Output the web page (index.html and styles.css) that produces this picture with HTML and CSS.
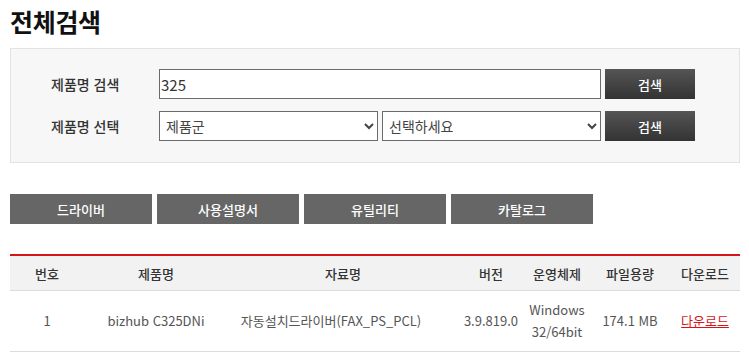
FILE: index.html
```html
<!DOCTYPE html>
<html lang="ko">
<head>
  <meta charset="UTF-8" />
  <title>전체검색</title>
  <link rel="stylesheet" href="styles.css">
</head>
<body>
  <div class="wrap">
    <h1 class="page-title">전체검색</h1>

    <!-- 검색 박스 -->
    <div class="search-box">
      <div class="search-row">
        <label class="search-label">제품명 검색</label>
        <input type="text" class="search-input" value="325" />
        <button class="search-btn">검색</button>
      </div>
      <div class="search-row">
        <label class="search-label">제품명 선택</label>
        <select class="search-select">
          <option>제품군</option>
        </select>
        <select class="search-select">
          <option>선택하세요</option>
        </select>
        <button class="search-btn">검색</button>
      </div>
    </div>

    <!-- 자료 분류 탭 -->
    <div class="tabs">
      <button class="tab">드라이버</button>
      <button class="tab">사용설명서</button>
      <button class="tab">유틸리티</button>
      <button class="tab">카탈로그</button>
    </div>

    <!-- 결과 목록 -->
    <table class="result-table">
      <colgroup>
        <col style="width:74px">
        <col style="width:144px">
        <col style="width:230px">
        <col style="width:66px">
        <col style="width:66px">
        <col style="width:80px">
        <col style="width:70px">
      </colgroup>
      <thead>
        <tr>
          <th>번호</th>
          <th>제품명</th>
          <th>자료명</th>
          <th>버전</th>
          <th>운영체제</th>
          <th>파일용량</th>
          <th>다운로드</th>
        </tr>
      </thead>
      <tbody>
        <tr>
          <td>1</td>
          <td>bizhub C325DNi</td>
          <td class="file-name">자동설치드라이버(FAX_PS_PCL)</td>
          <td>3.9.819.0</td>
          <td>Windows<br>32/64bit</td>
          <td>174.1 MB</td>
          <td><a href="#" class="down-link">다운로드</a></td>
        </tr>
      </tbody>
    </table>
  </div>
</body>
</html>
```

FILE: styles.css
```css
:root {
  --text: #333;
  --body-text: #555;
  --line: #dcdcdc;
  --accent: #d7141a;
}

body {
  margin: 0;
  font-family: "Noto Sans CJK KR", "Noto Sans", sans-serif;
  color: var(--text);
  background: #fff;
}

.wrap {
  padding: 0 10px;
  width: 730px;
}

.page-title {
  margin: 6px 0 12px;
  font-size: 25px;
  line-height: 30px;
  font-weight: bold;
  color: #111;
  letter-spacing: -0.3px;
}

.search-box {
  background: #f7f7f7;
  border: 1px solid #e3e3e3;
  padding: 20px 0 21px 40px;
}

.search-row {
  display: flex;
  align-items: center;
  gap: 4px;
  height: 30px;
}

.search-row + .search-row {
  margin-top: 12px;
}

.search-label {
  width: 104px;
  font-size: 14px;
  font-weight: 500;
  color: #333;
}

.search-input {
  box-sizing: border-box;
  width: 442px;
  height: 30px;
  border: 1px solid #6b6b6b;
  padding: 0 1px;
  font-family: inherit;
  font-size: 15px;
  color: #333;
  background: #fff;
}

.search-select {
  box-sizing: border-box;
  width: 219px;
  height: 30px;
  border: 1px solid #6b6b6b;
  border-radius: 0;
  padding: 0 2px;
  font-family: inherit;
  font-size: 14px;
  color: #444;
  background: #fff;
}

.search-btn {
  width: 90px;
  height: 30px;
  border: none;
  background: linear-gradient(#555, #333);
  color: #fff;
  font-family: inherit;
  font-size: 13px;
  font-weight: 500;
  cursor: pointer;
}

.tabs {
  display: flex;
  gap: 5px;
  margin-top: 31px;
}

.tab {
  width: 142px;
  height: 30px;
  border: none;
  background: #666;
  color: #fff;
  font-family: inherit;
  font-size: 13px;
  font-weight: 500;
  cursor: pointer;
}

.result-table {
  width: 730px;
  margin-top: 30px;
  border-collapse: collapse;
  table-layout: fixed;
  border-top: 2px solid var(--accent);
}

.result-table th {
  height: 34px;
  background: #f2f2f2;
  border-bottom: 1px solid var(--line);
  font-size: 13px;
  font-weight: 500;
  color: #333;
  padding: 0;
}

.result-table td {
  height: 60px;
  border-bottom: 1px solid var(--line);
  text-align: center;
  font-size: 13px;
  line-height: 22px;
  color: var(--body-text);
  padding: 0;
}

.result-table td.file-name {
  padding-right: 24px;
}

.down-link {
  color: var(--accent);
}
```
